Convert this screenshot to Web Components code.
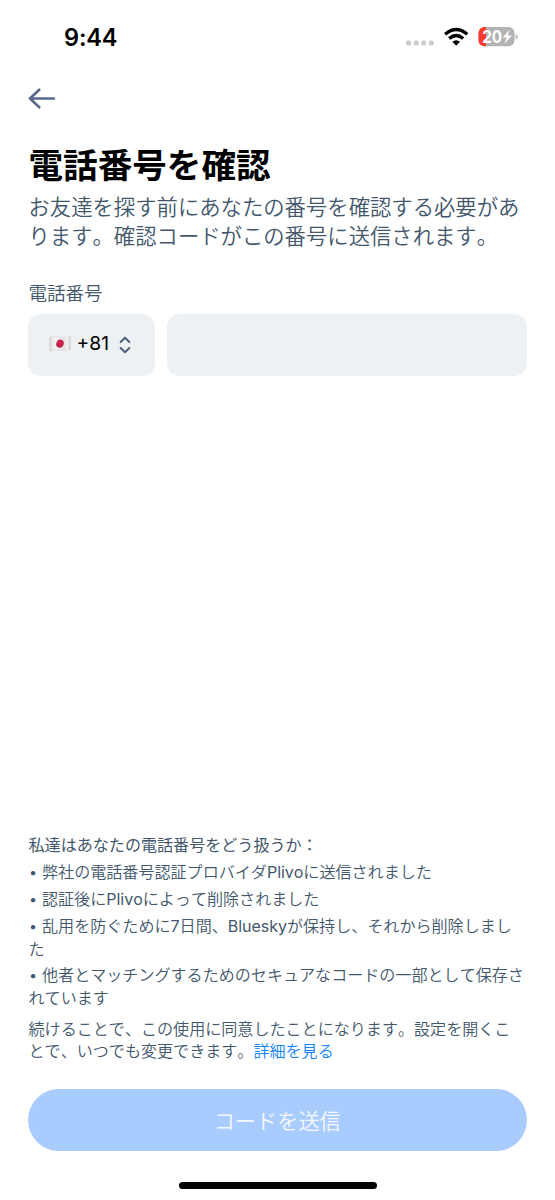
<!DOCTYPE html>
<html lang="ja">
<head>
<meta charset="utf-8">
<title>電話番号を確認</title>
<style>
html,body{margin:0;background:#fff}
body{width:555px;height:1200px;overflow:hidden;font-family:Inter,"Noto Sans CJK JP",sans-serif;color:#42576c;font-kerning:none;text-spacing-trim:space-all}
</style>
</head>
<body>
<verify-screen></verify-screen>
<script>
const define = (name, html) => customElements.define(name, class extends HTMLElement {
  constructor() {
    super();
    this.attachShadow({ mode: 'open' }).innerHTML = html;
  }
});

define('status-bar', `
<style>
:host{display:flex;height:74px;box-sizing:border-box;padding:0 37px 0 64px;justify-content:space-between;color:#000}
time{font-size:23.600px;font-weight:600;line-height:75px;letter-spacing:-.2px}
svg{display:block;width:114px;height:30px;margin-top:22px}
text{font-family:Inter,sans-serif;font-size:17.500px;font-weight:650}
</style>
<time>9:44</time>
<svg viewBox="404 22 114 30">
  <g fill="#cbcbcb"><rect x="406" y="40.600" width="5" height="5" rx="1.800"/><rect x="413.700" y="40.600" width="5" height="5" rx="1.800"/><rect x="421.200" y="40.600" width="5" height="5" rx="1.800"/><rect x="428.800" y="40.600" width="5" height="5" rx="1.800"/></g>
  <g fill="none" stroke="#000" stroke-width="3.300"><path d="M445.100 34.200Q456.200 24.800 467.300 34.200"/><path d="M449.200 38.500Q456.200 32.600 463.200 38.500"/></g>
  <path d="M452.400 41.800Q456.200 38.700 460 41.800L456.200 45.700Z"/>
  <clipPath id="b"><rect x="478.500" y="27" width="36" height="19.300" rx="6"/></clipPath>
  <g clip-path="url(#b)"><path fill="#b3b3b3" d="M478 27h37v20h-37z"/><path fill="#ff3b30" d="M478 27h8v20h-8z"/></g>
  <path fill="#b3b3b3" d="M515.700 34q2 .5 2 2.700t-2 2.700z"/>
  <text x="482.200" y="43.100" fill="#fff" textLength="20" lengthAdjust="spacingAndGlyphs">20</text>
  <path fill="#fff" d="M509.700 29.700L502.600 37.500H506.600L504.400 43.700L512 35.500H507.700Z"/>
</svg>`);

define('back-button', `
<style>:host{display:block;height:70px;padding-left:28px}svg{display:block;padding-top:13px}</style>
<svg width="28" height="24" viewBox="0 0 28 24" fill="none" stroke="#566b89" stroke-width="2.600" stroke-linecap="round" stroke-linejoin="round"><path d="M25.800 11.500H2M11.300 2.700L2 11.500l9.300 8.800"/></svg>`);

define('page-heading', `
<style>
:host{display:block;padding-left:28.500px}
h1{margin:0;font-size:34.600px;line-height:42px;font-weight:700;color:#000}
p{margin:7px 0 0;font-size:21.350px;line-height:28.500px;font-weight:350;white-space:nowrap}
</style>
<h1><slot name="title"></slot></h1><p><slot></slot></p>`);

define('phone-field', `
<style>
:host{display:block;padding:0 28.500px 0 28px;margin-top:30px}
label{display:block;font-size:18.500px;line-height:26px;height:34px;font-weight:350;padding-left:.5px}
.row{display:flex;gap:12px}
.code{width:126.500px}.num{flex:1}
.code,.num{height:62px;border-radius:13px;background:#edf1f4;box-sizing:border-box}
.code{display:flex;align-items:center;padding-left:20.500px;color:#000;font-size:19.300px}
.flag{width:22px;height:18px;margin:-2px 6px 0 0}
.dial{width:42.500px;line-height:58px;height:62px}
.chev{width:12px;height:18px;margin-top:0}
</style>
<label>電話番号</label>
<div class="row"><div class="code">
<svg class="flag" viewBox="0 0 22 18"><defs><linearGradient id="f"><stop offset="0" stop-color="#d6d7d7"/><stop offset=".22" stop-color="#f3f3f3"/><stop offset=".7" stop-color="#e4e4e4"/><stop offset=".87" stop-color="#f2f2f2"/><stop offset="1" stop-color="#c9cbcc"/></linearGradient></defs><path fill="url(#f)" stroke="#ccd0d2" stroke-width=".4" d="M.700 2.700Q6 1 11 2T21.300 1.300V14.500Q16 16.200 11 15.200T.700 16Z"/><ellipse cx="11" cy="8.700" rx="3.700" ry="4.100" fill="#c8234a" transform="rotate(20 11 8.700)"/></svg>
<span class="dial">+81</span>
<svg class="chev" viewBox="0 0 12 18" fill="none" stroke="#4a5f7c" stroke-width="1.900" stroke-linecap="round" stroke-linejoin="round"><path d="M1.600 6L6 1.700 10.400 6M1.600 12L6 16.300 10.400 12"/></svg>
</div><div class="num"></div></div>`);

define('policy-item', `
<style>:host{display:block;line-height:23px;margin-bottom:4px}</style>
<slot></slot>`);

define('policy-notes', `
<style>
:host{display:block;padding-left:28.500px;font-size:16.070px;font-weight:350;white-space:nowrap}
strong{display:block;font-weight:400;line-height:23px;margin-bottom:4px}
policy-item:last-of-type{margin-top:-1px}
.latin{font-weight:400;letter-spacing:-.06px}
p{margin:8px 0 0;line-height:22px}
a{color:#1083fe}
</style>
<strong>私達はあなたの電話番号をどう扱うか：</strong>
<policy-item>• 弊社の電話番号認証プロバイダ<span class="latin">Plivo</span>に送信されました</policy-item>
<policy-item>• 認証後に<span class="latin">Plivo</span>によって削除されました</policy-item>
<policy-item>• 乱用を防ぐために<span class="latin">7</span>日間、<span class="latin">Bluesky</span>が保持し、それから削除しまし<br>た</policy-item>
<policy-item>• 他者とマッチングするためのセキュアなコードの一部として保存さ<br>れています</policy-item>
<p>続けることで、この使用に同意したことになります。設定を開くこ<br>とで、いつでも変更できます。<a>詳細を見る</a></p>`);

define('send-button', `
<style>:host{display:block;margin:27px 28.500px 0 28px;height:62px;line-height:64px;border-radius:31px;background:#a8ccfd;color:#f5f9ff;text-align:center;font-size:21.200px;font-weight:350}</style>
<slot></slot>`);

define('home-indicator', `
<style>:host{display:block;width:198px;height:7px;border-radius:4px;background:#000;margin:30.500px auto 11.500px}</style>`);

define('verify-screen', `
<style>
:host{display:flex;flex-direction:column;height:1200px;width:555px}
.space{flex:1}
</style>
<status-bar></status-bar>
<back-button></back-button>
<page-heading><span slot="title">電話番号を確認</span>お友達を探す前にあなたの番号を確認する必要があ<br>ります。確認コードがこの番号に送信されます。</page-heading>
<phone-field></phone-field>
<div class="space"></div>
<policy-notes></policy-notes>
<send-button>コードを送信</send-button>
<home-indicator></home-indicator>`);
</script>
</body>
</html>
